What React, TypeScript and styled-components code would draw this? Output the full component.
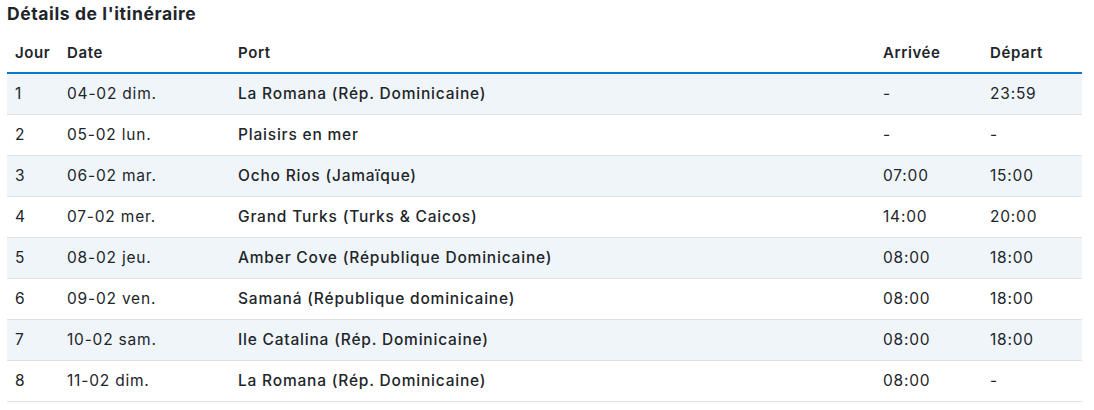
import React from "react";
import styled, { createGlobalStyle } from "styled-components";

const Global = createGlobalStyle`
  *, *::before, *::after { box-sizing: border-box; }
  html, body { margin: 0; padding: 0; background: #fff; }
  body { font-family: Inter, "Open Sans", sans-serif; color: #212529; }
`;

const Wrap = styled.div`
  padding: 3px 12px 0 7px;
`;

const Title = styled.h2`
  margin: 0 0 7px 0;
  font-size: 17.5px;
  line-height: 22px;
  font-weight: 700;
  letter-spacing: 0.6px;
  color: #212529;
`;

const Table = styled.table`
  width: 1075px;
  border-collapse: collapse;
  table-layout: fixed;
`;

const Th = styled.th<{ $w: number }>`
  width: ${(p) => p.$w}px;
  text-align: left;
  font-weight: 600;
  font-size: 15px;
  letter-spacing: 0.6px;
  height: 41px;
  padding: 0 8px;
  border-bottom: 2px solid #0a78c9;
  vertical-align: middle;
`;

const Tr = styled.tr<{ $odd: boolean }>`
  background: ${(p) => (p.$odd ? "#f0f5fa" : "#ffffff")};
`;

const Td = styled.td<{ $strong?: boolean }>`
  height: 41px;
  padding: 0 8px;
  font-size: 15.5px;
  letter-spacing: 0.8px;
  font-weight: ${(p) => (p.$strong ? 500 : 400)};
  border-bottom: 1px solid #dee2e6;
  white-space: nowrap;
`;

const rows = [
  ["1", "04-02 dim.", "La Romana (Rép. Dominicaine)", "-", "23:59"],
  ["2", "05-02 lun.", "Plaisirs en mer", "-", "-"],
  ["3", "06-02 mar.", "Ocho Rios (Jamaïque)", "07:00", "15:00"],
  ["4", "07-02 mer.", "Grand Turks (Turks & Caicos)", "14:00", "20:00"],
  ["5", "08-02 jeu.", "Amber Cove (République Dominicaine)", "08:00", "18:00"],
  ["6", "09-02 ven.", "Samaná (République dominicaine)", "08:00", "18:00"],
  ["7", "10-02 sam.", "Ile Catalina (Rép. Dominicaine)", "08:00", "18:00"],
  ["8", "11-02 dim.", "La Romana (Rép. Dominicaine)", "08:00", "-"],
];

export default function App() {
  return (
    <Wrap>
      <Global />
      <Title>Détails de l'itinéraire</Title>
      <Table>
        <thead>
          <tr>
            <Th $w={52}>Jour</Th>
            <Th $w={171}>Date</Th>
            <Th $w={645}>Port</Th>
            <Th $w={107}>Arrivée</Th>
            <Th $w={100}>Départ</Th>
          </tr>
        </thead>
        <tbody>
          {rows.map((r, i) => (
            <Tr key={i} $odd={i % 2 === 0}>
              <Td>{r[0]}</Td>
              <Td>{r[1]}</Td>
              <Td $strong>{r[2]}</Td>
              <Td>{r[3]}</Td>
              <Td>{r[4]}</Td>
            </Tr>
          ))}
        </tbody>
      </Table>
    </Wrap>
  );
}
